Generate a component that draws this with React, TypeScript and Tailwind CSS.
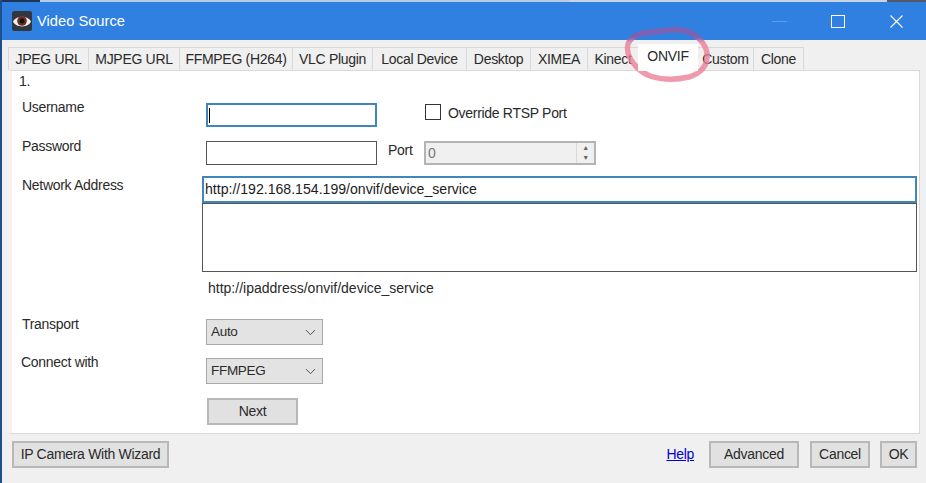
import { ChevronDown } from "lucide-react";

const tabs = [
  { label: "JPEG URL", w: "w-[81px]" },
  { label: "MJPEG URL", w: "w-[92px]" },
  { label: "FFMPEG (H264)", w: "w-[114px]" },
  { label: "VLC Plugin", w: "w-[81px]" },
  { label: "Local Device", w: "w-[95px]" },
  { label: "Desktop", w: "w-[65px]" },
  { label: "XIMEA", w: "w-[58px]" },
  { label: "Kinect", w: "w-[52px]" },
];

const btn =
  "flex items-center justify-center h-[27px] border-2 border-[#b8b8b8] bg-[#e1e1e1] text-[#2a2a2a]";

function Tab({ label, w }: { label: string; w: string }) {
  return (
    <div className={`${w} h-[23px] flex items-center justify-center bg-[#f0f0f0] border border-b-0 border-[#d9d9d9] -mr-px text-[#2a2a2a]`}>
      {label}
    </div>
  );
}

function ComboBox({ value }: { value: string }) {
  return (
    <div className="w-[117px] h-[26px] flex items-center justify-between border border-[#a8a8a8] bg-[#e3e3e3] pl-[4px] pr-[3px] text-[13.5px] text-[#2a2a2a]">
      <span>{value}</span>
      <ChevronDown size={17} strokeWidth={1.3} className="text-[#444]" />
    </div>
  );
}

function Label({ children, className = "" }: { children: string; className?: string }) {
  return <div className={`h-[18px] leading-[18px] text-[#2a2a2a] ${className}`}>{children}</div>;
}

function EyeIcon() {
  return (
    <svg width="20" height="20" viewBox="0 0 20 20" aria-hidden="true">
      <rect width="20" height="20" rx="2.5" fill="#33363c" />
      <path d="M1 10.5C4 4 16 4 19 10.5C16 17 4 17 1 10.5Z" fill="#f0f0f0" />
      <circle cx="10" cy="10" r="4.8" fill="#6a2c1e" />
      <circle cx="10" cy="10" r="2.4" fill="#16100e" />
    </svg>
  );
}

export default function App() {
  return (
    <div
      className="relative w-[926px] h-[483px] overflow-hidden bg-[#f0f0f0] text-[14px] tracking-[-0.3px] border-l-2 border-[#1f4e8c]"
      style={{ fontFamily: '"Liberation Sans", Arial, sans-serif' }}
    >
      {/* edge of the window behind */}
      <div className="flex h-[2px] -ml-[2px]">
        <div className="w-[40px] bg-[#1d3557]" />
        <div className="w-[530px] bg-[#b9cce6]" />
        <div className="w-[317px] bg-[#c8d4e4]" />
        <div className="flex-1 bg-[#555b66]" />
      </div>

      {/* title bar */}
      <div className="h-[38px] -ml-[2px] flex items-center bg-[#2f80e0] text-white">
        <div className="ml-[12px]">
          <EyeIcon />
        </div>
        <span className="ml-[5px] text-[14.7px] tracking-normal">Video Source</span>
        <div className="ml-auto flex items-center">
          <div className="w-[15px] h-px bg-[#5a9ce8] mr-[44px]" />
          <div className="w-[14px] h-[13px] border border-white mr-[45px]" />
          <svg width="13" height="13" viewBox="0 0 13 13" className="mr-[23px]" aria-hidden="true">
            <path d="M0.5 0.5L12.5 12.5M12.5 0.5L0.5 12.5" stroke="#fff" strokeWidth="1.1" />
          </svg>
        </div>
      </div>

      {/* tabs */}
      <div className="flex items-end h-[30px] pl-[6px]">
        {tabs.map((t) => (
          <Tab key={t.label} label={t.label} w={t.w} />
        ))}
        <div className="relative z-10 w-[60px] h-[27px] -mb-px flex items-center justify-center bg-white -mr-px pb-[3px] text-[#2a2a2a]">
          ONVIF
        </div>
        <Tab label="Custom" w="w-[57px]" />
        <Tab label="Clone" w="w-[51px]" />
      </div>

      {/* panel */}
      <div className="w-[913px] h-[364px] ml-[5px] border border-[#d9d9d9] border-l-[5px] border-l-[#f3f3f3] bg-white">
        <div className="h-[27px] pl-[7px] pt-[1px] leading-[18px] text-[#2a2a2a]">1.</div>

        <div className="flex h-[39px] pl-[10px]">
          <Label className="w-[184px]">Username</Label>
          <div className="relative w-[171px] h-[24px] mt-[5px] border-2 border-[#3f86bf] bg-white">
            <div className="absolute left-[1px] top-[3px] w-px h-[15px] bg-black" />
          </div>
          <div className="ml-[48px] mt-[6px] w-[16px] h-[16px] border border-[#333] bg-white" />
          <span className="ml-[7px] mt-[6px] leading-[18px] text-[#2a2a2a]">Override RTSP Port</span>
        </div>

        <div className="flex h-[39px] pl-[10px]">
          <Label className="w-[184px]">Password</Label>
          <div className="w-[171px] h-[24px] mt-[4px] border border-[#555] bg-white" />
          <Label className="ml-[11px] mt-[4px] w-[36px]">Port</Label>
          <div className="flex items-center w-[172px] h-[24px] mt-[4px] border-2 border-[#b4b4b4] bg-[#f0f0f0] pl-[2px]">
            <span className="text-[#777]">0</span>
            <div className="ml-auto flex flex-col items-center w-[18px] h-full border-l border-[#d8d8d8] text-[7px] leading-[10px] text-[#666]">
              <span>▲</span>
              <span>▼</span>
            </div>
          </div>
        </div>

        <div className="flex pl-[10px]">
          <Label className="w-[180px]">Network Address</Label>
          <div className="flex flex-col">
            <div className="flex items-center w-[715px] h-[27px] border-2 border-[#3f86bf] bg-white pl-[1px] text-[14.1px] tracking-normal text-[#1c1c1c]">
              http://192.168.154.199/onvif/device_service
            </div>
            <div className="w-[715px] h-[69px] border border-[#555] bg-white" />
            <div className="ml-[6px] mt-[7px] h-[18px] leading-[18px] tracking-normal text-[#2a2a2a]">
              http://ipaddress/onvif/device_service
            </div>
          </div>
        </div>

        <div className="flex h-[38px] mt-[18px] pl-[10px]">
          <Label className="w-[184px]">Transport</Label>
          <div className="mt-[4px]">
            <ComboBox value="Auto" />
          </div>
        </div>

        <div className="flex h-[45px] pl-[9px]">
          <Label className="w-[185px]">Connect with</Label>
          <div className="mt-[5px]">
            <ComboBox value="FFMPEG" />
          </div>
        </div>

        <div className={`${btn} w-[91px] ml-[195px]`}>Next</div>
      </div>

      {/* footer */}
      <div className="flex items-center h-[27px] mt-[7px] pl-[10px]">
        <div className={`${btn} w-[157px]`}>IP Camera With Wizard</div>
        <a href="#" className="ml-auto text-[#0000d8] underline">Help</a>
        <div className={`${btn} w-[90px] ml-[15px]`}>Advanced</div>
        <div className={`${btn} w-[60px] ml-[11px]`}>Cancel</div>
        <div className={`${btn} w-[37px] ml-[10px] mr-[9px]`}>OK</div>
      </div>

      {/* red marker circle drawn over the ONVIF tab */}
      <svg className="absolute -left-[2px] top-0 pointer-events-none" width="926" height="483" aria-hidden="true">
        <defs>
          <linearGradient id="mark" gradientUnits="userSpaceOnUse" x1="0" y1="37" x2="0" y2="43">
            <stop offset="0" stopColor="#8f5aa4" />
            <stop offset="1" stopColor="#ec8098" />
          </linearGradient>
        </defs>
        <path
          d="M628 44C632 35 641 33 652 32C665 31 680 27 691 33C701 38 708 48 707 57C707 67 699 74 689 77C676 80 662 80 650 76C640 72 631 63 628 53C627 49 627 47 628 44Z"
          fill="none"
          stroke="url(#mark)"
          strokeWidth="5.5"
          strokeOpacity="0.8"
        />
      </svg>
    </div>
  );
}
